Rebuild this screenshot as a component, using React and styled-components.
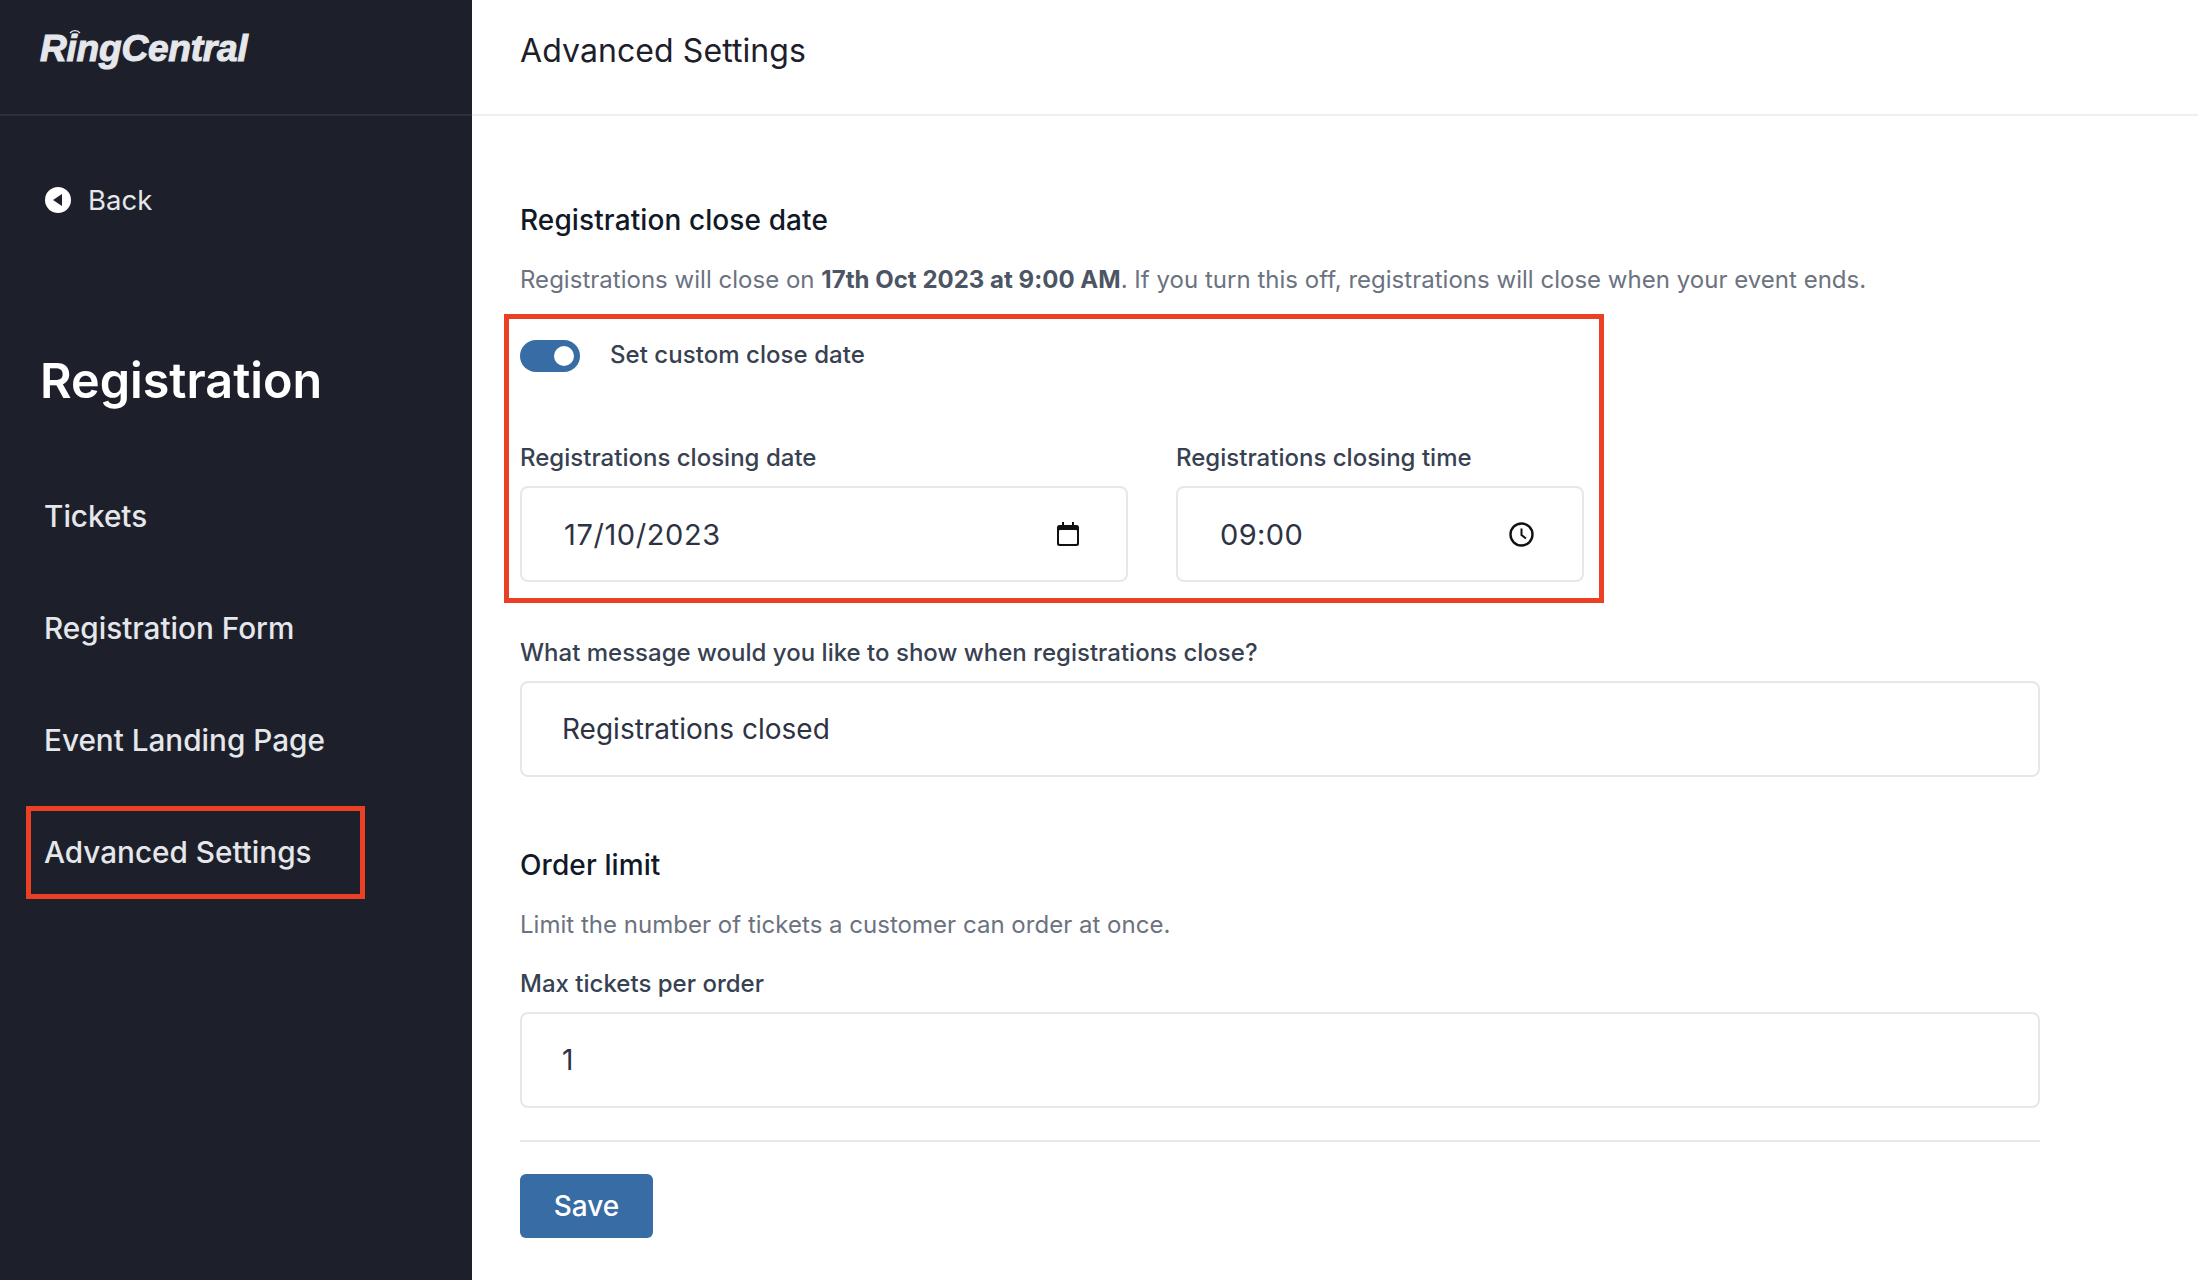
import React from 'react';
import styled, { createGlobalStyle } from 'styled-components';

const GlobalStyle = createGlobalStyle`
	* {
		box-sizing: border-box;
	}

	body {
		margin: 0;
		background: #fff;
		font-family: Inter, "Liberation Sans", sans-serif;
	}
`

const Page = styled.div`
	display: flex;
	width: 2198px;
	height: 1280px;
	overflow: hidden;
`

const Sidebar = styled.aside`
	flex: 0 0 472px;
	background: #1d202a;
	color: #e5e7eb;
`

const LogoBar = styled.div`
	height: 116px;
	padding: 27px 0 0 40px;
	border-bottom: 2px solid #2d303d;
`

const Logo = styled.div`
	position: relative;
	display: inline-block;
	font-family: "Liberation Sans", Arial, sans-serif;
	font-size: 37px;
	line-height: 44px;
	font-weight: 700;
	font-style: italic;
	letter-spacing: -0.2px;
	color: #e5e7eb;
	-webkit-text-stroke: 1.1px #e5e7eb;
`

const LogoSignal = styled.svg`
	position: absolute;
	top: 2px;
	left: 29px;
	width: 12px;
	height: 10px;
`

const BackLink = styled.div`
	display: flex;
	align-items: center;
	gap: 17px;
	margin: 66px 0 0 45px;
	height: 36px;
	font-size: 27.5px;
	color: #e5e7eb;
`

const SidebarTitle = styled.h1`
	margin: 135px 0 0 40px;
	font-size: 48.5px;
	line-height: 56px;
	font-weight: 600;
	color: #fff;
`

const Nav = styled.nav`
	margin-top: 51px;
	display: flex;
	flex-direction: column;
`

const NavItem = styled.div`
	position: relative;
	height: 112px;
	padding-left: 44px;
	font-size: 29.7px;
	font-weight: 500;
	line-height: 112px;
	color: #e5e7eb;
`

const NavHighlight = styled.div`
	position: absolute;
	top: 10px;
	left: 26px;
	width: 339px;
	height: 93px;
	border: 5px solid #ec4025;
`

const Main = styled.main`
	flex: 1;
	background: #fff;
`

const TopBar = styled.header`
	height: 116px;
	padding-left: 48px;
	border-bottom: 2px solid #eff0f3;
	font-size: 32px;
	line-height: 102px;
	letter-spacing: 0.08px;
	color: #1d202a;
`

const Content = styled.div`
	width: 1568px;
	padding: 84px 0 0 48px;
`

const SectionTitle = styled.h2`
	margin: ${props => props.$top || 0}px 0 0;
	font-size: 28px;
	line-height: 40px;
	font-weight: 500;
	letter-spacing: 0.1px;
	color: #111827;
`

const Description = styled.p`
	margin: 23px 0 0;
	font-size: 24px;
	line-height: 34px;
	letter-spacing: 0.02px;
	color: #6b7280;

	strong {
		font-weight: 700;
		color: #4b5563;
	}
`

const Highlight = styled.div`
	position: relative;
	margin-top: 43px;
	width: 1064px;

	&::after {
		content: '';
		position: absolute;
		top: -26px;
		left: -16px;
		right: -20px;
		bottom: -21px;
		border: 5px solid #ec4025;
		pointer-events: none;
	}
`

const ToggleRow = styled.div`
	display: flex;
	align-items: flex-start;
	gap: 30px;
	height: 32px;
`

const Toggle = styled.div`
	position: relative;
	width: 60px;
	height: 32px;
	border-radius: 16px;
	background: #386ca4;

	&::after {
		content: '';
		position: absolute;
		top: 6px;
		right: 6px;
		width: 20px;
		height: 20px;
		border-radius: 50%;
		background: #fff;
	}
`

const ToggleLabel = styled.span`
	font-size: 24px;
	line-height: 30px;
	font-weight: 500;
	letter-spacing: 0.05px;
	color: #374151;
`

const FieldRow = styled.div`
	display: flex;
	gap: 48px;
	margin-top: 69px;
`

const Field = styled.div`
	flex: ${props => props.$flex || 'none'};
	width: ${props => props.$width ? `${props.$width}px` : 'auto'};
	margin-top: ${props => props.$top || 0}px;
`

const Label = styled.label`
	display: block;
	font-size: 24px;
	line-height: 34px;
	font-weight: 500;
	letter-spacing: 0.01px;
	color: #374151;
`

const InputBox = styled.div`
	display: flex;
	align-items: center;
	height: 96px;
	margin-top: 11px;
	padding: 0 ${props => props.$right || 40}px 0 ${props => props.$left || 40}px;
	border: 2px solid #e5e7eb;
	border-radius: 8px;
	background: #fff;
`

const Input = styled.input`
	flex: 1;
	min-width: 0;
	padding: 0;
	border: 0;
	outline: 0;
	background: transparent;
	font-family: inherit;
	font-size: ${props => props.$size || 28}px;
	letter-spacing: ${props => props.$spacing || 0}px;
	color: #2d3343;
`

const PickerIcon = styled.svg`
	flex: none;
	display: block;
`

const Divider = styled.hr`
	height: 2px;
	margin: 32px 0 0;
	border: 0;
	background: #e5e7eb;
`

const SaveButton = styled.button`
	display: block;
	width: 133px;
	height: 64px;
	margin-top: 32px;
	padding: 0;
	border: 0;
	border-radius: 6px;
	background: #386ca4;
	font-family: inherit;
	font-size: 28px;
	font-weight: 500;
	color: #fff;
`

const BackIcon = () => (
	<svg width="26" height="26" viewBox="0 0 26 26">
		<circle cx="13" cy="13" r="13" fill="#fff" />
		<path d="M17 7v12L8 13z" fill="#1d202a" />
	</svg>
);

const CalendarIcon = () => (
	<PickerIcon width="22" height="24" viewBox="0 0 22 24">
		<path d="M5 0h2v3h8V0h2v3h2.5A2.5 2.5 0 0 1 22 5.500V21.500A2.500 2.500 0 0 1 19.500 24H2.500A2.500 2.500 0 0 1 0 21.500V5.500A2.500 2.500 0 0 1 2.500 3H5z" fill="#111" />
		<rect x="2" y="8" width="18" height="14" rx="1" fill="#fff" />
	</PickerIcon>
);

const ClockIcon = () => (
	<PickerIcon width="25" height="25" viewBox="0 0 25 25">
		<circle cx="12.500" cy="12.500" r="11" fill="none" stroke="#111" strokeWidth="2.400" />
		<path d="M12.500 6.500v6.500l4.500 3.500" fill="none" stroke="#111" strokeWidth="2" />
	</PickerIcon>
);

const navItems = ['Tickets', 'Registration Form', 'Event Landing Page', 'Advanced Settings'];

const App = () => (
	<Page>
		<GlobalStyle />
		<Sidebar>
			<LogoBar>
				<Logo>
					RingCentral
					<LogoSignal viewBox="0 0 12 10">
						<path d="M1 4a6.500 6.500 0 0 1 10 0M3 6.500a3.800 3.800 0 0 1 6 0" fill="none" stroke="#e5e7eb" strokeWidth="1.200" />
					</LogoSignal>
				</Logo>
			</LogoBar>
			<BackLink>
				<BackIcon />
				Back
			</BackLink>
			<SidebarTitle>Registration</SidebarTitle>
			<Nav>
				{navItems.map(item => (
					<NavItem key={item}>
						{item}
						{item === 'Advanced Settings' && <NavHighlight />}
					</NavItem>
				))}
			</Nav>
		</Sidebar>
		<Main>
			<TopBar>Advanced Settings</TopBar>
			<Content>
				<SectionTitle>Registration close date</SectionTitle>
				<Description>
					Registrations will close on <strong>17th Oct 2023 at 9:00 AM</strong>. If you turn this off, registrations will close when your event ends.
				</Description>
				<Highlight>
					<ToggleRow>
						<Toggle />
						<ToggleLabel>Set custom close date</ToggleLabel>
					</ToggleRow>
					<FieldRow>
						<Field $width={608}>
							<Label>Registrations closing date</Label>
							<InputBox $right={47} $left={42}>
								<Input readOnly value="17/10/2023" $size={29} $spacing={0.6} />
								<CalendarIcon />
							</InputBox>
						</Field>
						<Field $width={408}>
							<Label>Registrations closing time</Label>
							<InputBox $right={48} $left={42}>
								<Input readOnly value="09:00" $size={29} $spacing={0.4} />
								<ClockIcon />
							</InputBox>
						</Field>
					</FieldRow>
				</Highlight>
				<Field $top={54}>
					<Label>What message would you like to show when registrations close?</Label>
					<InputBox>
						<Input readOnly value="Registrations closed" />
					</InputBox>
				</Field>
				<SectionTitle $top={68}>Order limit</SectionTitle>
				<Description>Limit the number of tickets a customer can order at once.</Description>
				<Field $top={25}>
					<Label>Max tickets per order</Label>
					<InputBox>
						<Input readOnly value="1" />
					</InputBox>
				</Field>
				<Divider />
				<SaveButton>Save</SaveButton>
			</Content>
		</Main>
	</Page>
);

export default App;
